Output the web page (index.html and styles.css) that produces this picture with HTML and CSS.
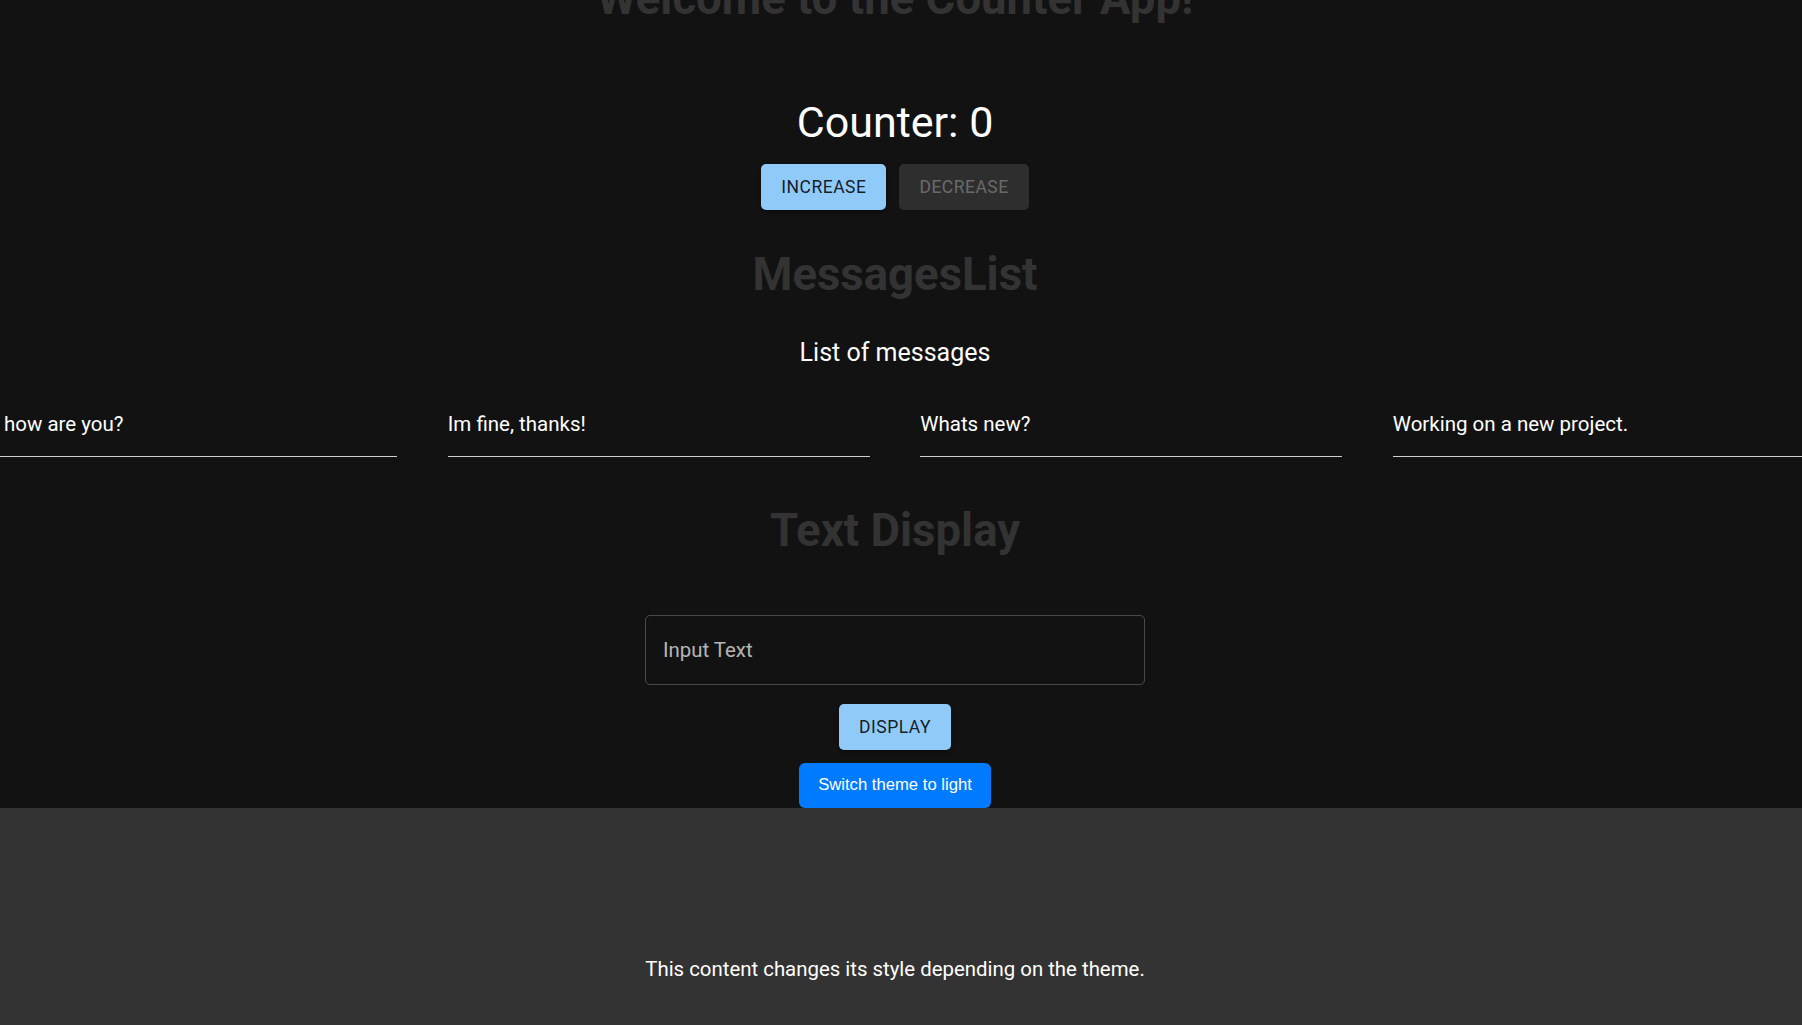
FILE: index.html
```html
<!DOCTYPE html>
<html lang="en">
<head>
<meta charset="utf-8">
<title>Counter App</title>
<link rel="stylesheet" href="styles.css">
</head>
<body>
<div class="app">
  <h1 class="heading title">Welcome to the Counter App!</h1>
  <h4 class="counter">Counter: 0</h4>
  <div class="btn-row">
    <button class="mui-btn primary">Increase</button>
    <button class="mui-btn disabled" disabled>Decrease</button>
  </div>
  <h1 class="heading messages-heading">MessagesList</h1>
  <h6 class="subtitle">List of messages</h6>
  <div class="messages">
    <div class="message">Hi, how are you?</div>
    <div class="message">Im fine, thanks!</div>
    <div class="message">Whats new?</div>
    <div class="message">Working on a new project.</div>
  </div>
  <h1 class="heading text-heading">Text Display</h1>
  <div class="field">
    <span class="field-label">Input Text</span>
  </div>
  <button class="mui-btn primary display-btn">Display</button>
  <button class="switch-btn">Switch theme to light</button>
</div>
<div class="panel">
  <p class="panel-text">This content changes its style depending on the theme.</p>
</div>
</body>
</html>
```

FILE: styles.css
```css
html, body {
  margin: 0;
  padding: 0;
}

body {
  background: #121212;
  color: #fff;
  font-family: Roboto, "Liberation Sans", Arial, sans-serif;
  overflow-x: hidden;
}

.app {
  display: flex;
  flex-direction: column;
  align-items: center;
  text-align: center;
  padding-right: 12px;
}

.heading {
  margin: 0;
  font-size: 45.5px;
  line-height: 54px;
  font-weight: 700;
  color: #333333;
}

.title {
  margin-top: -28px;
}

.counter {
  margin: 72px 0 0;
  font-size: 43px;
  line-height: 49px;
  font-weight: 400;
  color: #fff;
}

.btn-row {
  display: flex;
  gap: 13px;
  margin-top: 17px;
}

.mui-btn {
  font-family: Roboto, "Liberation Sans", Arial, sans-serif;
  font-size: 17.5px;
  font-weight: 400;
  line-height: 30.6px;
  letter-spacing: 0.5px;
  text-transform: uppercase;
  padding: 7.5px 20px;
  border: none;
  border-radius: 5px;
  cursor: pointer;
}

.mui-btn.primary {
  background: #90caf9;
  color: rgba(0, 0, 0, 0.87);
  box-shadow: 0 3px 1px -2px rgba(0,0,0,0.2), 0 2px 2px 0 rgba(0,0,0,0.14), 0 1px 5px 0 rgba(0,0,0,0.12);
}

.mui-btn.disabled {
  background: rgba(255, 255, 255, 0.12);
  color: rgba(255, 255, 255, 0.3);
  cursor: default;
}

.messages-heading {
  margin-top: 38px;
}

.subtitle {
  margin: 36px 0 0;
  font-size: 25px;
  line-height: 29px;
  font-weight: 400;
  color: #fff;
}

.messages {
  align-self: stretch;
  display: flex;
  justify-content: center;
  gap: 50.5px;
  margin-top: 46.5px;
}

.message {
  flex: 0 0 422px;
  text-align: left;
  font-size: 20.5px;
  line-height: 23.4px;
  padding-bottom: 19.5px;
  border-bottom: 1px solid #cfcfcf;
  white-space: nowrap;
}

.text-heading {
  margin-top: 47px;
}

.field {
  box-sizing: border-box;
  width: 500px;
  height: 70px;
  margin-top: 57px;
  border: 1px solid rgba(255, 255, 255, 0.23);
  border-radius: 5px;
  display: flex;
  align-items: center;
  padding: 0 17px;
}

.field-label {
  font-size: 20.4px;
  line-height: 23px;
  color: rgba(255, 255, 255, 0.7);
}

.display-btn {
  margin-top: 19px;
}

.switch-btn {
  margin-top: 13px;
  background: #007bff;
  color: #fff;
  font-family: "Liberation Sans", Arial, sans-serif;
  font-size: 16.67px;
  padding: 12.5px 19px;
  border: none;
  border-radius: 6px;
  cursor: pointer;
}

.panel {
  background: #333333;
  min-height: 400px;
  padding-top: 150px;
  padding-right: 12px;
}

.panel-text {
  margin: 0;
  text-align: center;
  font-size: 20.4px;
  line-height: 23.4px;
  color: #fff;
}
```
